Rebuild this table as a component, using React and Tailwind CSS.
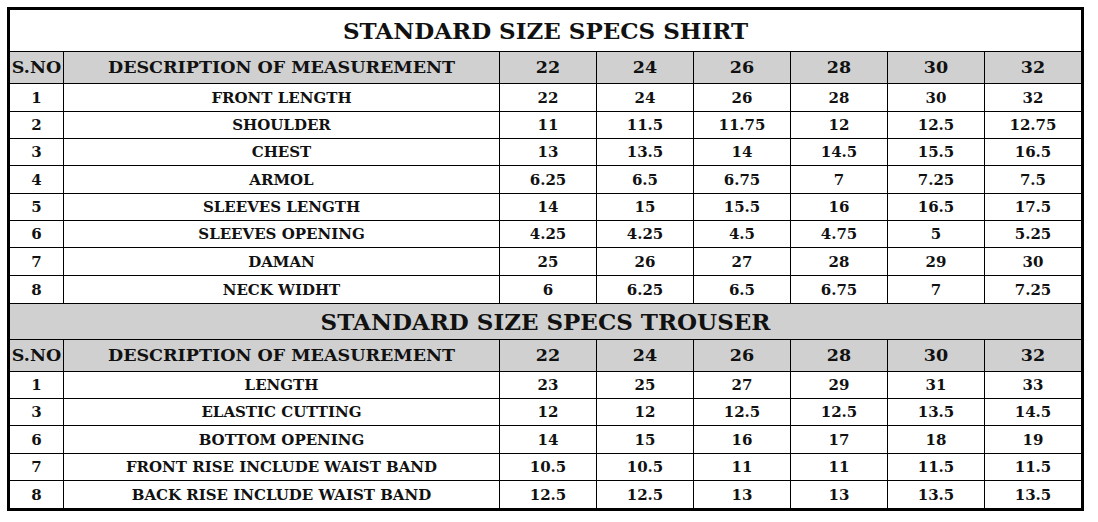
const sizes = ["22", "24", "26", "28", "30", "32"];

const shirtRows = [
  { no: "1", name: "FRONT LENGTH", vals: ["22", "24", "26", "28", "30", "32"] },
  { no: "2", name: "SHOULDER", vals: ["11", "11.5", "11.75", "12", "12.5", "12.75"] },
  { no: "3", name: "CHEST", vals: ["13", "13.5", "14", "14.5", "15.5", "16.5"] },
  { no: "4", name: "ARMOL", vals: ["6.25", "6.5", "6.75", "7", "7.25", "7.5"] },
  { no: "5", name: "SLEEVES LENGTH", vals: ["14", "15", "15.5", "16", "16.5", "17.5"] },
  { no: "6", name: "SLEEVES OPENING", vals: ["4.25", "4.25", "4.5", "4.75", "5", "5.25"] },
  { no: "7", name: "DAMAN", vals: ["25", "26", "27", "28", "29", "30"] },
  { no: "8", name: "NECK WIDHT", vals: ["6", "6.25", "6.5", "6.75", "7", "7.25"] },
];
const shirtHeights = ["h-[28px]", "h-[27px]", "h-[27px]", "h-[28px]", "h-[27px]", "h-[27px]", "h-[28px]", "h-[28px]"];

const trouserRows = [
  { no: "1", name: "LENGTH", vals: ["23", "25", "27", "29", "31", "33"] },
  { no: "3", name: "ELASTIC CUTTING", vals: ["12", "12", "12.5", "12.5", "13.5", "14.5"] },
  { no: "6", name: "BOTTOM OPENING", vals: ["14", "15", "16", "17", "18", "19"] },
  { no: "7", name: "FRONT RISE INCLUDE WAIST BAND", vals: ["10.5", "10.5", "11", "11", "11.5", "11.5"] },
  { no: "8", name: "BACK RISE INCLUDE WAIST BAND", vals: ["12.5", "12.5", "13", "13", "13.5", "13.5"] },
];
const trouserHeights = ["h-[27px]", "h-[27px]", "h-[28px]", "h-[27px]", "h-[27px]"];

const Cell = ({ children, last, h, gray, big }) => (
  <div
    className={`flex items-center justify-center border-b border-black ${last ? "" : "border-r"} ${h} ${
      gray ? "bg-[#d0d0d0]" : "bg-white"
    } ${big ? "text-[17.5px]" : "text-[15px] pt-px"}`}
  >
    {children}
  </div>
);

const HeaderRow = () => (
  <>
    <Cell h="h-[32px]" gray big>S.NO</Cell>
    <Cell h="h-[32px]" gray big>DESCRIPTION OF MEASUREMENT</Cell>
    {sizes.map((s, i) => (
      <Cell key={s} h="h-[32px]" gray big last={i === sizes.length - 1}>
        {s}
      </Cell>
    ))}
  </>
);

const BodyRows = ({ rows, heights, lastSection }) =>
  rows.map((r, ri) => {
    const h = heights[ri];
    const isLast = lastSection && ri === rows.length - 1;
    return (
      <div key={r.name} className="contents">
        <Cell h={`${h} ${isLast ? "border-b-0" : ""}`}>{r.no}</Cell>
        <Cell h={`${h} ${isLast ? "border-b-0" : ""}`}>{r.name}</Cell>
        {r.vals.map((v, i) => (
          <Cell key={i} h={`${h} ${isLast ? "border-b-0" : ""}`} last={i === r.vals.length - 1}>
            {v}
          </Cell>
        ))}
      </div>
    );
  });

export default function App() {
  return (
    <div className="w-[1098px] h-[522px] bg-white pt-[7px] pl-[7px]">
      <div
        className="w-[1077px] border-[3px] border-black font-bold text-[#111] leading-none"
        style={{ fontFamily: '"DejaVu Serif", "Liberation Serif", serif' }}
      >
        <div className="grid grid-cols-[54px_436px_97px_97px_97px_97px_97px_96px]">
          <div className="col-span-8 h-[42px] flex items-center justify-center border-b border-black bg-white text-[23px]">
            STANDARD SIZE SPECS SHIRT
          </div>
          <HeaderRow />
          <BodyRows rows={shirtRows} heights={shirtHeights} />
          <div className="col-span-8 h-[36px] flex items-center justify-center border-b border-black bg-[#d0d0d0] text-[23px]">
            STANDARD SIZE SPECS TROUSER
          </div>
          <HeaderRow />
          <BodyRows rows={trouserRows} heights={trouserHeights} lastSection />
        </div>
      </div>
    </div>
  );
}
